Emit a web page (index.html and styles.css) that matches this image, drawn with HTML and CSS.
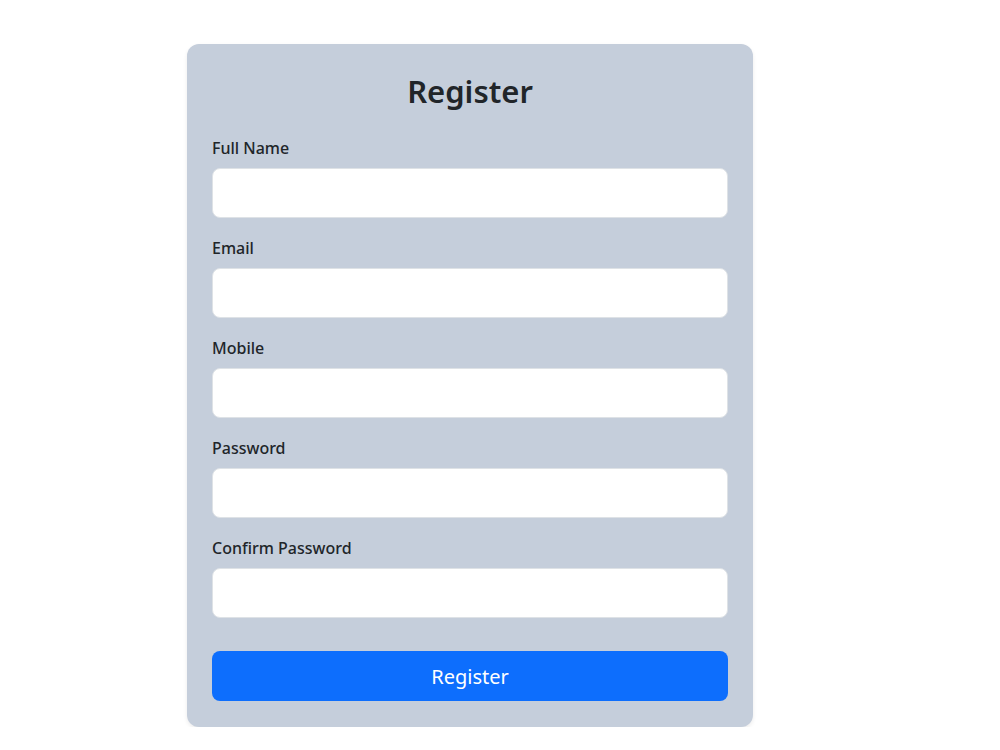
FILE: index.html
```html
<!DOCTYPE html>
<html>
	<head>
		<title>Register</title>
		<meta charset="utf-8"/>
		<meta name="viewport" content="width=device-width, initial-scale=1">
		<link rel="stylesheet" href="styles.css">
	</head>
	<body>
		<div class="page">
			<form class="card" onsubmit="return false;">
				<h2 class="title">Register</h2>
				<div class="group">
					<label for="fullname">Full Name</label>
					<input type="text" id="fullname" class="field">
				</div>
				<div class="group">
					<label for="email">Email</label>
					<input type="email" id="email" class="field">
				</div>
				<div class="group">
					<label for="mobile">Mobile</label>
					<input type="tel" id="mobile" class="field">
				</div>
				<div class="group">
					<label for="password">Password</label>
					<input type="password" id="password" class="field">
				</div>
				<div class="group">
					<label for="confirm">Confirm Password</label>
					<input type="password" id="confirm" class="field">
				</div>
				<button type="submit" class="btn">Register</button>
			</form>
		</div>
	</body>
</html>
```

FILE: styles.css
```css
body {
	margin: 0;
	background-color: #fff;
	color: #212529;
	font-family: "Noto Sans", "Open Sans", sans-serif;
}

.page {
	padding: 44px 0 0 187px;
}

.card {
	width: 516px;
	padding: 25px 25px 26px;
	background-color: #c5cedb;
	border-radius: 12px;
	box-shadow: 0 2px 4px rgba(0, 0, 0, 0.08);
	display: flex;
	flex-direction: column;
}

.title {
	margin: 4px 0 26px;
	text-align: center;
	font-size: 31px;
	font-weight: 600;
	line-height: 1.2;
}

.group {
	display: flex;
	flex-direction: column;
	margin-bottom: 18px;
}

label {
	font-size: 16px;
	font-weight: 500;
	line-height: 24px;
	margin-bottom: 8px;
}

.field {
	box-sizing: border-box;
	height: 50px;
	padding: 8px 16px;
	font-size: 20px;
	font-family: inherit;
	border: 1px solid #dee2e6;
	border-radius: 8px;
	background-color: #fff;
}

.btn {
	margin-top: 15px;
	height: 50px;
	border: none;
	border-radius: 8px;
	background-color: #0d6efd;
	color: #fff;
	font-family: inherit;
	font-size: 20px;
}
```
